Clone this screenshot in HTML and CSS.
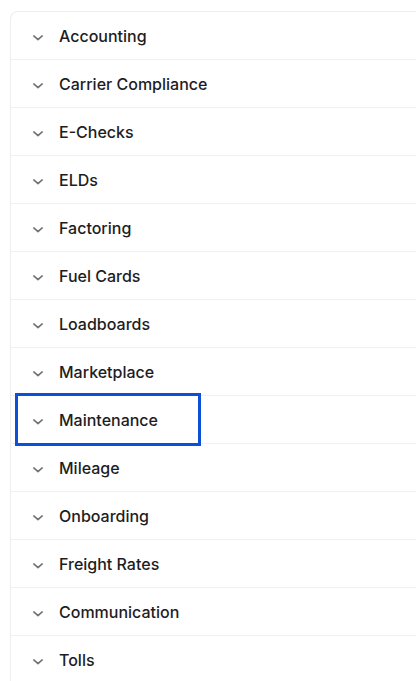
FILE: index.html
```html
<!DOCTYPE html>
<html lang="en">
<head>
    <meta charset="UTF-8">
    <meta name="viewport" content="width=device-width, initial-scale=1.0">
    <link rel="stylesheet" href="styles.css">
    <title>Categories</title>
</head>
<body>

    <!-- Lista de categorias -->
    <div class="acordeon">
        <div class="fila"><button type="button" class="cabecera"><svg class="flecha" viewBox="0 0 12 7"><path d="M1 1l5 4.5L11 1"/></svg><span>Accounting</span></button></div>
        <div class="fila"><button type="button" class="cabecera"><svg class="flecha" viewBox="0 0 12 7"><path d="M1 1l5 4.5L11 1"/></svg><span>Carrier Compliance</span></button></div>
        <div class="fila"><button type="button" class="cabecera"><svg class="flecha" viewBox="0 0 12 7"><path d="M1 1l5 4.5L11 1"/></svg><span>E-Checks</span></button></div>
        <div class="fila"><button type="button" class="cabecera"><svg class="flecha" viewBox="0 0 12 7"><path d="M1 1l5 4.5L11 1"/></svg><span>ELDs</span></button></div>
        <div class="fila"><button type="button" class="cabecera"><svg class="flecha" viewBox="0 0 12 7"><path d="M1 1l5 4.5L11 1"/></svg><span>Factoring</span></button></div>
        <div class="fila"><button type="button" class="cabecera"><svg class="flecha" viewBox="0 0 12 7"><path d="M1 1l5 4.5L11 1"/></svg><span>Fuel Cards</span></button></div>
        <div class="fila"><button type="button" class="cabecera"><svg class="flecha" viewBox="0 0 12 7"><path d="M1 1l5 4.5L11 1"/></svg><span>Loadboards</span></button></div>
        <div class="fila"><button type="button" class="cabecera"><svg class="flecha" viewBox="0 0 12 7"><path d="M1 1l5 4.5L11 1"/></svg><span>Marketplace</span></button></div>
        <div class="fila"><button type="button" class="cabecera enfocada"><svg class="flecha" viewBox="0 0 12 7"><path d="M1 1l5 4.5L11 1"/></svg><span>Maintenance</span></button></div>
        <div class="fila"><button type="button" class="cabecera"><svg class="flecha" viewBox="0 0 12 7"><path d="M1 1l5 4.5L11 1"/></svg><span>Mileage</span></button></div>
        <div class="fila"><button type="button" class="cabecera"><svg class="flecha" viewBox="0 0 12 7"><path d="M1 1l5 4.5L11 1"/></svg><span>Onboarding</span></button></div>
        <div class="fila"><button type="button" class="cabecera"><svg class="flecha" viewBox="0 0 12 7"><path d="M1 1l5 4.5L11 1"/></svg><span>Freight Rates</span></button></div>
        <div class="fila"><button type="button" class="cabecera"><svg class="flecha" viewBox="0 0 12 7"><path d="M1 1l5 4.5L11 1"/></svg><span>Communication</span></button></div>
        <div class="fila"><button type="button" class="cabecera"><svg class="flecha" viewBox="0 0 12 7"><path d="M1 1l5 4.5L11 1"/></svg><span>Tolls</span></button></div>
    </div>

</body>
</html>
```

FILE: styles.css
```css
html, body {
    margin: 0;
    background-color: #fff;
}

body {
    font-family: Inter, "Noto Sans", sans-serif;
    padding: 11px 0 0 10px;
}

.acordeon {
    border: 1px solid #eeeeee;
    border-right: none;
    border-radius: 8px 0 0 0;
}

.fila {
    height: 47px;
    border-bottom: 1px solid #f1f1f1;
    display: flex;
    align-items: stretch;
}

.cabecera {
    display: flex;
    align-items: center;
    gap: 16px;
    margin-left: 7px;
    padding: 0 40px 0 15px;
    border: none;
    background: none;
    font-family: inherit;
    font-size: 16px;
    font-weight: 500;
    color: #1d1d1f;
    cursor: pointer;
}

.flecha {
    width: 10px;
    height: 6px;
    margin-top: 4px;
    fill: none;
    stroke: #6e6e6e;
    stroke-width: 1.8;
    stroke-linecap: round;
    stroke-linejoin: round;
}

.enfocada {
    outline: 3px solid #0b50d6;
    outline-offset: 0;
}
```
